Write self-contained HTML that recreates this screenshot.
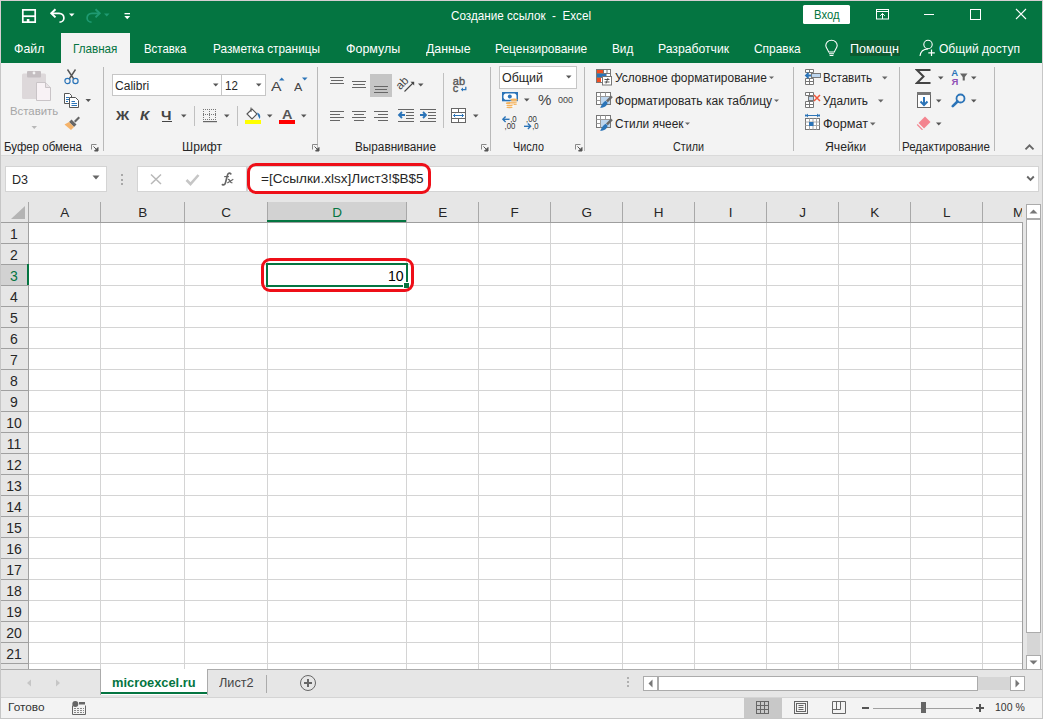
<!DOCTYPE html><html><head><meta charset="utf-8"><style>
html,body{margin:0;padding:0;width:1043px;height:719px;overflow:hidden;background:#fff;}
body{position:relative;font-family:"Liberation Sans",sans-serif;}
div{position:absolute;}
.t{position:absolute;white-space:nowrap;transform-origin:0 0;}
</style></head><body>
<div style="left:0px;top:0px;width:1043px;height:719px;background:#e6e6e6;"></div>
<div style="left:0px;top:0px;width:1043px;height:63px;background:#047541;"></div>
<div style="left:0px;top:63px;width:1043px;height:92px;background:#f3f3f3;"></div>
<div style="left:0px;top:155px;width:1043px;height:1px;background:#dadada;"></div>
<div style="left:61px;top:33px;width:69px;height:31px;background:#f3f3f3;"></div>
<span class="t" style="left:451.35px;top:9.00px;font-size:13px;line-height:13px;color:#fff;transform:scaleX(0.8988);white-space:pre;">Создание ссылок  -  Excel</span>
<div style="left:803px;top:5px;width:47px;height:19px;background:#fff;border-radius:1.5px;"></div>
<span class="t" style="left:813.90px;top:8.85px;font-size:12px;line-height:12px;color:#047541;transform:scaleX(0.9379);">Вход</span>
<span class="t" style="left:14.05px;top:41.50px;font-size:13px;line-height:13px;color:#fff;transform:scaleX(0.9493);">Файл</span>
<span class="t" style="left:143.75px;top:41.50px;font-size:13px;line-height:13px;color:#fff;transform:scaleX(0.8783);">Вставка</span>
<span class="t" style="left:212.85px;top:41.50px;font-size:13px;line-height:13px;color:#fff;transform:scaleX(0.9068);">Разметка страницы</span>
<span class="t" style="left:346.35px;top:41.50px;font-size:13px;line-height:13px;color:#fff;transform:scaleX(0.9588);">Формулы</span>
<span class="t" style="left:425.85px;top:41.50px;font-size:13px;line-height:13px;color:#fff;transform:scaleX(0.9483);">Данные</span>
<span class="t" style="left:495.35px;top:41.50px;font-size:13px;line-height:13px;color:#fff;transform:scaleX(0.9189);">Рецензирование</span>
<span class="t" style="left:612.35px;top:41.50px;font-size:13px;line-height:13px;color:#fff;transform:scaleX(0.9074);">Вид</span>
<span class="t" style="left:658.35px;top:41.50px;font-size:13px;line-height:13px;color:#fff;transform:scaleX(0.9371);">Разработчик</span>
<span class="t" style="left:754.35px;top:41.50px;font-size:13px;line-height:13px;color:#fff;transform:scaleX(0.9165);">Справка</span>
<span class="t" style="left:938.75px;top:41.50px;font-size:13px;line-height:13px;color:#fff;transform:scaleX(0.9267);">Общий доступ</span>
<span class="t" style="left:72.65px;top:41.50px;font-size:13px;line-height:13px;color:#047541;transform:scaleX(0.8981);">Главная</span>
<div style="left:850px;top:40px;width:50px;height:16px;background:#0c5a30;"></div>
<span class="t" style="left:850.35px;top:41.50px;font-size:13px;line-height:13px;color:#fff;transform:scaleX(0.9688);">Помощн</span>
<span class="t" style="left:4.40px;top:140.85px;font-size:12px;line-height:12px;color:#262626;transform:scaleX(0.9561);">Буфер обмена</span>
<span class="t" style="left:182.40px;top:140.85px;font-size:12px;line-height:12px;color:#262626;transform:scaleX(1.0121);">Шрифт</span>
<span class="t" style="left:355.40px;top:140.85px;font-size:12px;line-height:12px;color:#262626;transform:scaleX(0.9801);">Выравнивание</span>
<span class="t" style="left:513.40px;top:140.85px;font-size:12px;line-height:12px;color:#262626;transform:scaleX(0.8971);">Число</span>
<span class="t" style="left:673.40px;top:140.85px;font-size:12px;line-height:12px;color:#262626;transform:scaleX(0.8955);">Стили</span>
<span class="t" style="left:825.40px;top:140.85px;font-size:12px;line-height:12px;color:#262626;transform:scaleX(1.0177);">Ячейки</span>
<span class="t" style="left:902.40px;top:140.85px;font-size:12px;line-height:12px;color:#262626;transform:scaleX(0.9622);">Редактирование</span>
<div style="left:103px;top:67px;width:1px;height:84px;background:#b9b9b9;"></div>
<div style="left:317px;top:67px;width:1px;height:84px;background:#b9b9b9;"></div>
<div style="left:490px;top:67px;width:1px;height:84px;background:#b9b9b9;"></div>
<div style="left:584px;top:67px;width:1px;height:84px;background:#b9b9b9;"></div>
<div style="left:793px;top:67px;width:1px;height:84px;background:#b9b9b9;"></div>
<div style="left:899px;top:67px;width:1px;height:84px;background:#b9b9b9;"></div>
<div style="left:994px;top:67px;width:1px;height:84px;background:#b9b9b9;"></div>
<div style="left:5px;top:166px;width:102px;height:26px;background:#fff;border:1px solid #d4d4d4;box-sizing:border-box;"></div>
<span class="t" style="left:12.35px;top:173.00px;font-size:13px;line-height:13px;color:#262626;transform:scaleX(0.9652);">D3</span>
<div style="left:137px;top:166px;width:110px;height:26px;background:#fff;border:1px solid #d4d4d4;box-sizing:border-box;"></div>
<div style="left:247px;top:166px;width:792px;height:26px;background:#fff;border:1px solid #d4d4d4;box-sizing:border-box;"></div>
<span class="t" style="left:261.35px;top:172.30px;font-size:13px;line-height:13px;color:#262626;transform:scaleX(1.0423);">=[Ссылки.xlsx]Лист3!$B$5</span>
<div style="left:0px;top:202px;width:1022px;height:20px;background:#e6e6e6;"></div>
<div style="left:29px;top:223px;width:993px;height:446px;background:#fff;"></div>
<div style="left:0px;top:222px;width:28px;height:447px;background:#e6e6e6;"></div>
<div style="left:268px;top:202px;width:138px;height:20px;background:#d2d2d2;"></div>
<div style="left:100px;top:202px;width:1px;height:20px;background:#a8a8a8;"></div>
<div style="left:184px;top:202px;width:1px;height:20px;background:#a8a8a8;"></div>
<div style="left:267px;top:202px;width:1px;height:20px;background:#a8a8a8;"></div>
<div style="left:406px;top:202px;width:1px;height:20px;background:#a8a8a8;"></div>
<div style="left:478px;top:202px;width:1px;height:20px;background:#a8a8a8;"></div>
<div style="left:550px;top:202px;width:1px;height:20px;background:#a8a8a8;"></div>
<div style="left:622px;top:202px;width:1px;height:20px;background:#a8a8a8;"></div>
<div style="left:694px;top:202px;width:1px;height:20px;background:#a8a8a8;"></div>
<div style="left:766px;top:202px;width:1px;height:20px;background:#a8a8a8;"></div>
<div style="left:838px;top:202px;width:1px;height:20px;background:#a8a8a8;"></div>
<div style="left:910px;top:202px;width:1px;height:20px;background:#a8a8a8;"></div>
<div style="left:982px;top:202px;width:1px;height:20px;background:#a8a8a8;"></div>
<div style="left:28px;top:202px;width:1px;height:20px;background:#a8a8a8;"></div>
<div style="left:0px;top:222px;width:1022px;height:1px;background:#9e9e9e;"></div>
<div style="left:267px;top:220px;width:139px;height:2px;background:#047541;"></div>
<div style="left:100px;top:223px;width:1px;height:446px;background:#d4d4d4;"></div>
<div style="left:184px;top:223px;width:1px;height:446px;background:#d4d4d4;"></div>
<div style="left:267px;top:223px;width:1px;height:446px;background:#d4d4d4;"></div>
<div style="left:406px;top:223px;width:1px;height:446px;background:#d4d4d4;"></div>
<div style="left:478px;top:223px;width:1px;height:446px;background:#d4d4d4;"></div>
<div style="left:550px;top:223px;width:1px;height:446px;background:#d4d4d4;"></div>
<div style="left:622px;top:223px;width:1px;height:446px;background:#d4d4d4;"></div>
<div style="left:694px;top:223px;width:1px;height:446px;background:#d4d4d4;"></div>
<div style="left:766px;top:223px;width:1px;height:446px;background:#d4d4d4;"></div>
<div style="left:838px;top:223px;width:1px;height:446px;background:#d4d4d4;"></div>
<div style="left:910px;top:223px;width:1px;height:446px;background:#d4d4d4;"></div>
<div style="left:982px;top:223px;width:1px;height:446px;background:#d4d4d4;"></div>
<div style="left:29px;top:243px;width:993px;height:1px;background:#d4d4d4;"></div>
<div style="left:0px;top:243px;width:28px;height:1px;background:#a0a0a0;"></div>
<div style="left:29px;top:264px;width:993px;height:1px;background:#d4d4d4;"></div>
<div style="left:0px;top:264px;width:28px;height:1px;background:#a0a0a0;"></div>
<div style="left:29px;top:285px;width:993px;height:1px;background:#d4d4d4;"></div>
<div style="left:0px;top:285px;width:28px;height:1px;background:#a0a0a0;"></div>
<div style="left:29px;top:306px;width:993px;height:1px;background:#d4d4d4;"></div>
<div style="left:0px;top:306px;width:28px;height:1px;background:#a0a0a0;"></div>
<div style="left:29px;top:327px;width:993px;height:1px;background:#d4d4d4;"></div>
<div style="left:0px;top:327px;width:28px;height:1px;background:#a0a0a0;"></div>
<div style="left:29px;top:348px;width:993px;height:1px;background:#d4d4d4;"></div>
<div style="left:0px;top:348px;width:28px;height:1px;background:#a0a0a0;"></div>
<div style="left:29px;top:369px;width:993px;height:1px;background:#d4d4d4;"></div>
<div style="left:0px;top:369px;width:28px;height:1px;background:#a0a0a0;"></div>
<div style="left:29px;top:390px;width:993px;height:1px;background:#d4d4d4;"></div>
<div style="left:0px;top:390px;width:28px;height:1px;background:#a0a0a0;"></div>
<div style="left:29px;top:411px;width:993px;height:1px;background:#d4d4d4;"></div>
<div style="left:0px;top:411px;width:28px;height:1px;background:#a0a0a0;"></div>
<div style="left:29px;top:432px;width:993px;height:1px;background:#d4d4d4;"></div>
<div style="left:0px;top:432px;width:28px;height:1px;background:#a0a0a0;"></div>
<div style="left:29px;top:453px;width:993px;height:1px;background:#d4d4d4;"></div>
<div style="left:0px;top:453px;width:28px;height:1px;background:#a0a0a0;"></div>
<div style="left:29px;top:474px;width:993px;height:1px;background:#d4d4d4;"></div>
<div style="left:0px;top:474px;width:28px;height:1px;background:#a0a0a0;"></div>
<div style="left:29px;top:495px;width:993px;height:1px;background:#d4d4d4;"></div>
<div style="left:0px;top:495px;width:28px;height:1px;background:#a0a0a0;"></div>
<div style="left:29px;top:516px;width:993px;height:1px;background:#d4d4d4;"></div>
<div style="left:0px;top:516px;width:28px;height:1px;background:#a0a0a0;"></div>
<div style="left:29px;top:537px;width:993px;height:1px;background:#d4d4d4;"></div>
<div style="left:0px;top:537px;width:28px;height:1px;background:#a0a0a0;"></div>
<div style="left:29px;top:558px;width:993px;height:1px;background:#d4d4d4;"></div>
<div style="left:0px;top:558px;width:28px;height:1px;background:#a0a0a0;"></div>
<div style="left:29px;top:579px;width:993px;height:1px;background:#d4d4d4;"></div>
<div style="left:0px;top:579px;width:28px;height:1px;background:#a0a0a0;"></div>
<div style="left:29px;top:600px;width:993px;height:1px;background:#d4d4d4;"></div>
<div style="left:0px;top:600px;width:28px;height:1px;background:#a0a0a0;"></div>
<div style="left:29px;top:621px;width:993px;height:1px;background:#d4d4d4;"></div>
<div style="left:0px;top:621px;width:28px;height:1px;background:#a0a0a0;"></div>
<div style="left:29px;top:642px;width:993px;height:1px;background:#d4d4d4;"></div>
<div style="left:0px;top:642px;width:28px;height:1px;background:#a0a0a0;"></div>
<div style="left:29px;top:663px;width:993px;height:1px;background:#d4d4d4;"></div>
<div style="left:0px;top:663px;width:28px;height:1px;background:#a0a0a0;"></div>
<div style="left:28px;top:222px;width:1px;height:447px;background:#a0a0a0;"></div>
<div style="left:1022px;top:222px;width:1px;height:447px;background:#a0a0a0;"></div>
<div style="left:0px;top:265px;width:28px;height:20px;background:#d2d2d2;"></div>
<div style="left:27px;top:264px;width:2px;height:21px;background:#047541;"></div>
<svg style="position:absolute;left:8px;top:204px;" width="18" height="16" viewBox="0 0 18 16"><path d="M17 2 L17 15 L3 15 Z" fill="#b4b4b4"/></svg>
<span class="t" style="left:60.20px;top:205.58px;font-size:13.5px;line-height:13.5px;color:#262626;transform:scaleX(1.0000);">A</span>
<span class="t" style="left:138.20px;top:205.58px;font-size:13.5px;line-height:13.5px;color:#262626;transform:scaleX(1.0000);">B</span>
<span class="t" style="left:221.33px;top:205.58px;font-size:13.5px;line-height:13.5px;color:#262626;transform:scaleX(1.0000);">C</span>
<span class="t" style="left:332.33px;top:205.58px;font-size:13.5px;line-height:13.5px;color:#047541;transform:scaleX(1.0000);">D</span>
<span class="t" style="left:438.20px;top:205.58px;font-size:13.5px;line-height:13.5px;color:#262626;transform:scaleX(1.0000);">E</span>
<span class="t" style="left:510.58px;top:205.58px;font-size:13.5px;line-height:13.5px;color:#262626;transform:scaleX(1.0000);">F</span>
<span class="t" style="left:581.45px;top:205.58px;font-size:13.5px;line-height:13.5px;color:#262626;transform:scaleX(1.0000);">G</span>
<span class="t" style="left:653.83px;top:205.58px;font-size:13.5px;line-height:13.5px;color:#262626;transform:scaleX(1.0000);">H</span>
<span class="t" style="left:728.82px;top:205.58px;font-size:13.5px;line-height:13.5px;color:#262626;transform:scaleX(1.0000);">I</span>
<span class="t" style="left:799.33px;top:205.58px;font-size:13.5px;line-height:13.5px;color:#262626;transform:scaleX(1.0000);">J</span>
<span class="t" style="left:870.20px;top:205.58px;font-size:13.5px;line-height:13.5px;color:#262626;transform:scaleX(1.0000);">K</span>
<span class="t" style="left:942.95px;top:205.58px;font-size:13.5px;line-height:13.5px;color:#262626;transform:scaleX(1.0000);">L</span>
<span class="t" style="left:1013.08px;top:205.58px;font-size:13.5px;line-height:13.5px;color:#262626;transform:scaleX(1.0000);">M</span>
<span class="t" style="left:10.11px;top:227.16px;font-size:14px;line-height:14px;color:#262626;transform:scaleX(1.0000);">1</span>
<span class="t" style="left:10.11px;top:248.16px;font-size:14px;line-height:14px;color:#262626;transform:scaleX(1.0000);">2</span>
<span class="t" style="left:10.11px;top:269.16px;font-size:14px;line-height:14px;color:#047541;transform:scaleX(1.0000);">3</span>
<span class="t" style="left:10.11px;top:290.16px;font-size:14px;line-height:14px;color:#262626;transform:scaleX(1.0000);">4</span>
<span class="t" style="left:10.11px;top:311.16px;font-size:14px;line-height:14px;color:#262626;transform:scaleX(1.0000);">5</span>
<span class="t" style="left:10.11px;top:332.16px;font-size:14px;line-height:14px;color:#262626;transform:scaleX(1.0000);">6</span>
<span class="t" style="left:10.11px;top:353.16px;font-size:14px;line-height:14px;color:#262626;transform:scaleX(1.0000);">7</span>
<span class="t" style="left:10.11px;top:374.16px;font-size:14px;line-height:14px;color:#262626;transform:scaleX(1.0000);">8</span>
<span class="t" style="left:10.11px;top:395.16px;font-size:14px;line-height:14px;color:#262626;transform:scaleX(1.0000);">9</span>
<span class="t" style="left:6.21px;top:416.16px;font-size:14px;line-height:14px;color:#262626;transform:scaleX(1.0000);">10</span>
<span class="t" style="left:6.73px;top:437.16px;font-size:14px;line-height:14px;color:#262626;transform:scaleX(1.0000);">11</span>
<span class="t" style="left:6.21px;top:458.16px;font-size:14px;line-height:14px;color:#262626;transform:scaleX(1.0000);">12</span>
<span class="t" style="left:6.21px;top:479.16px;font-size:14px;line-height:14px;color:#262626;transform:scaleX(1.0000);">13</span>
<span class="t" style="left:6.21px;top:500.16px;font-size:14px;line-height:14px;color:#262626;transform:scaleX(1.0000);">14</span>
<span class="t" style="left:6.21px;top:521.16px;font-size:14px;line-height:14px;color:#262626;transform:scaleX(1.0000);">15</span>
<span class="t" style="left:6.21px;top:542.16px;font-size:14px;line-height:14px;color:#262626;transform:scaleX(1.0000);">16</span>
<span class="t" style="left:6.21px;top:563.16px;font-size:14px;line-height:14px;color:#262626;transform:scaleX(1.0000);">17</span>
<span class="t" style="left:6.21px;top:584.16px;font-size:14px;line-height:14px;color:#262626;transform:scaleX(1.0000);">18</span>
<span class="t" style="left:6.21px;top:605.16px;font-size:14px;line-height:14px;color:#262626;transform:scaleX(1.0000);">19</span>
<span class="t" style="left:6.21px;top:626.16px;font-size:14px;line-height:14px;color:#262626;transform:scaleX(1.0000);">20</span>
<span class="t" style="left:6.21px;top:647.16px;font-size:14px;line-height:14px;color:#262626;transform:scaleX(1.0000);">21</span>
<div style="left:1022px;top:202px;width:4px;height:20px;background:#e6e6e6;"></div>
<div style="left:266px;top:263px;width:142px;height:24px;border:2px solid #047541;box-sizing:border-box;"></div>
<div style="left:404px;top:283px;width:5px;height:5px;background:#047541;outline:1px solid #fff;"></div>
<span class="t" style="left:388.30px;top:269.16px;font-size:14px;line-height:14px;color:#000;transform:scaleX(1.0095);">10</span>
<div style="left:247px;top:163px;width:184px;height:31px;border:3px solid #ee0f18;border-radius:9px;box-sizing:border-box;"></div>
<div style="left:261px;top:258px;width:153px;height:34px;border:3px solid #ee0f18;border-radius:9px;box-sizing:border-box;"></div>
<div style="left:1023px;top:202px;width:19px;height:467px;background:#e6e6e6;"></div>
<div style="left:1026px;top:204px;width:15px;height:15px;background:#fff;border:1px solid #ababab;box-sizing:border-box;"></div>
<div style="left:1026px;top:219px;width:15px;height:414px;background:#fff;border:1px solid #ababab;box-sizing:border-box;"></div>
<div style="left:1026px;top:655px;width:15px;height:15px;background:#fff;border:1px solid #ababab;box-sizing:border-box;"></div>
<div style="left:0px;top:669px;width:1043px;height:29px;background:#e6e6e6;"></div>
<div style="left:0px;top:669px;width:100px;height:1px;background:#ababab;"></div>
<div style="left:208px;top:669px;width:835px;height:1px;background:#ababab;"></div>
<div style="left:100px;top:669px;width:108px;height:26px;background:#fff;border-left:1px solid #ababab;border-right:1px solid #ababab;box-sizing:border-box;"></div>
<div style="left:101px;top:692px;width:106px;height:2px;background:#047541;"></div>
<span class="t" style="left:111.83px;top:676.18px;font-size:13.5px;line-height:13.5px;color:#047541;font-weight:bold;transform:scaleX(0.9520);">microexcel.ru</span>
<span class="t" style="left:219.35px;top:676.20px;font-size:13px;line-height:13px;color:#444;transform:scaleX(0.9764);">Лист2</span>
<div style="left:266px;top:675px;width:1px;height:18px;background:#ababab;"></div>
<div style="left:643px;top:676px;width:15px;height:15px;background:#fff;border:1px solid #ababab;box-sizing:border-box;"></div>
<div style="left:658px;top:676px;width:320px;height:15px;background:#fff;border:1px solid #ababab;box-sizing:border-box;"></div>
<div style="left:978px;top:677px;width:32px;height:13px;background:#d6d6d6;"></div>
<div style="left:1027px;top:633px;width:13px;height:22px;background:#d6d6d6;"></div>
<div style="left:1010px;top:676px;width:15px;height:15px;background:#fff;border:1px solid #ababab;box-sizing:border-box;"></div>
<div style="left:0px;top:698px;width:1043px;height:20px;background:#f3f3f3;"></div>
<div style="left:0px;top:697px;width:1043px;height:1px;background:#d4d4d4;"></div>
<span class="t" style="left:8.03px;top:702.07px;font-size:11.5px;line-height:11.5px;color:#333;transform:scaleX(1.0312);">Готово</span>
<div style="left:744px;top:698px;width:38px;height:20px;background:#c8c8c8;"></div>
<span class="t" style="left:995.02px;top:702.07px;font-size:11.5px;line-height:11.5px;color:#333;transform:scaleX(0.9114);">100 %</span>
<div style="left:0px;top:0px;width:1043px;height:1px;background:#d6cfd2;"></div>
<div style="left:0px;top:0px;width:1px;height:63px;background:#d6cfd2;"></div>
<div style="left:0px;top:63px;width:1px;height:656px;background:#c6c6c6;"></div>
<div style="left:1042px;top:0px;width:1px;height:63px;background:#d6cfd2;"></div>
<div style="left:1042px;top:63px;width:1px;height:656px;background:#c6c6c6;"></div>
<div style="left:0px;top:718px;width:1043px;height:1px;background:#c6c6c6;"></div>
<svg style="position:absolute;left:21px;top:8px;" width="16" height="16" viewBox="0 0 16 16"><path d="M1.8 1.8 H14.2 V14.2 H1.8 Z" fill="none" stroke="#fff" stroke-width="1.7"/><path d="M2 8.2 H14" stroke="#fff" stroke-width="1.8"/><rect x="5.8" y="11" width="2.6" height="3" fill="#fff"/></svg>
<svg style="position:absolute;left:49px;top:7px;" width="18" height="17" viewBox="0 0 18 17"><path d="M6.5 2.2 L2.3 6.3 L6.5 10.4" fill="none" stroke="#fff" stroke-width="2" stroke-linejoin="miter"/><path d="M3 6.3 H10 C13 6.3 14.9 8.5 14.9 11 C14.9 13.4 13 15.2 10.5 15.2" fill="none" stroke="#fff" stroke-width="1.7"/></svg>
<svg style="position:absolute;left:69px;top:13px;" width="6" height="4" viewBox="0 0 6 4"><path d="M0 0.5 H5.5 L2.75 3.5 Z" fill="#fff"/></svg>
<svg style="position:absolute;left:84px;top:7px;" width="18" height="17" viewBox="0 0 18 17"><path d="M11.5 2.2 L15.7 6.3 L11.5 10.4" fill="none" stroke="#1f9a72" stroke-width="2" stroke-linejoin="miter"/><path d="M15 6.3 H8 C5 6.3 3.1 8.5 3.1 11 C3.1 13.4 5 15.2 7.5 15.2" fill="none" stroke="#1f9a72" stroke-width="1.7"/></svg>
<svg style="position:absolute;left:104px;top:13px;" width="6" height="4" viewBox="0 0 6 4"><path d="M0 0.5 H5.5 L2.75 3.5 Z" fill="#1f9a72"/></svg>
<svg style="position:absolute;left:124px;top:12px;" width="7" height="8" viewBox="0 0 7 8"><rect x="0.5" y="1" width="5.5" height="1.3" fill="#fff"/><path d="M0.3 4 H6.2 L3.25 7.2 Z" fill="#fff"/></svg>
<svg style="position:absolute;left:875px;top:8px;" width="15" height="12" viewBox="0 0 15 12"><rect x="1.5" y="1.5" width="12" height="9.5" fill="none" stroke="#fff" stroke-width="1"/><path d="M1.5 3.5 H13.5" stroke="#fff" stroke-width="1"/><path d="M7.5 11 V5.5 M5.2 7.8 L7.5 5.5 L9.8 7.8" stroke="#fff" stroke-width="1" fill="none"/></svg>
<div style="left:924px;top:14px;width:10px;height:1px;background:#fff;"></div>
<div style="left:970px;top:9px;width:11px;height:11px;border:1px solid #fff;box-sizing:border-box;"></div>
<svg style="position:absolute;left:1015px;top:8px;" width="12" height="12" viewBox="0 0 12 12"><path d="M1 1 L11 11 M11 1 L1 11" stroke="#fff" stroke-width="1.1"/></svg>
<svg style="position:absolute;left:824px;top:39px;" width="15" height="18" viewBox="0 0 15 18"><path d="M7.5 1.2 C4 1.2 1.8 3.8 1.8 6.6 C1.8 9.2 4.2 10.8 4.6 13 H10.4 C10.8 10.8 13.2 9.2 13.2 6.6 C13.2 3.8 11 1.2 7.5 1.2 Z" fill="none" stroke="#fff" stroke-width="1.1"/><path d="M5 14.7 H10 M5.6 16.5 H9.4" stroke="#fff" stroke-width="1.1"/></svg>
<svg style="position:absolute;left:919px;top:39px;" width="17" height="18" viewBox="0 0 17 18"><circle cx="9" cy="5.5" r="4.2" fill="none" stroke="#fff" stroke-width="1.1"/><path d="M1 17 C1.5 12.5 4.5 10 9 10" fill="none" stroke="#fff" stroke-width="1.1"/><path d="M12.5 10.5 V17 M9.3 13.8 H15.8" stroke="#fff" stroke-width="1.2"/></svg>
<svg style="position:absolute;left:20px;top:70px;" width="32" height="32" viewBox="0 0 32 32"><rect x="2" y="3.5" width="24" height="25.5" rx="1.5" fill="#ddd8da"/><rect x="7" y="1" width="14" height="6.5" rx="1" fill="#c4bec1"/><circle cx="14" cy="3" r="1.4" fill="#f3f3f3"/><path d="M16.5 12.5 H25.5 L30.5 17.5 V30.5 H16.5 Z" fill="#f8f2f5" stroke="#c9c4c7" stroke-width="1"/><path d="M25.5 12.5 V17.5 H30.5" fill="#e8e2e5" stroke="#c9c4c7" stroke-width="1"/></svg>
<span class="t" style="left:10.12px;top:106.27px;font-size:11.5px;line-height:11.5px;color:#a6a6a6;transform:scaleX(0.9892);">Вставить</span>
<svg style="position:absolute;left:31px;top:125px;" width="7" height="5" viewBox="0 0 7 5"><path d="M0.5 1 H6 L3.25 4 Z" fill="#b8b8b8"/></svg>
<svg style="position:absolute;left:63px;top:69px;" width="17" height="16" viewBox="0 0 17 16"><path d="M4.5 0.5 L10.8 10 M12.5 0.5 L6.2 10" stroke="#555" stroke-width="1.4"/><circle cx="4.5" cy="12" r="2.6" fill="none" stroke="#2b74b8" stroke-width="1.2"/><circle cx="12.5" cy="12" r="2.6" fill="none" stroke="#2b74b8" stroke-width="1.2"/></svg>
<svg style="position:absolute;left:63px;top:92px;" width="17" height="17" viewBox="0 0 17 17"><path d="M1.5 1.5 H6.5 L8.5 3.5 V11.5 H1.5 Z" fill="#fff" stroke="#555" stroke-width="1"/><path d="M3 5.5 H6 M3 7.5 H6 M3 9.5 H5" stroke="#2b74b8" stroke-width="1"/><path d="M6.5 5.5 H12.5 L15.5 8.5 V15.5 H6.5 Z" fill="#fff" stroke="#555" stroke-width="1"/><path d="M8.5 9.5 H12 M8.5 11.5 H14 M8.5 13.5 H14" stroke="#2b74b8" stroke-width="1"/></svg>
<svg style="position:absolute;left:85px;top:98px;" width="7" height="5" viewBox="0 0 7 5"><path d="M0.5 1 H6 L3.25 4 Z" fill="#555"/></svg>
<svg style="position:absolute;left:63px;top:115px;" width="18" height="16" viewBox="0 0 18 16"><path d="M11 6 L15.5 1.5 L17 3 L12.5 7.5 Z" fill="#666"/><path d="M8.5 4.5 L13.5 9.5 L11 12 L6 7 Z" fill="#666"/><path d="M6 7 L11 12 L8 15 L1.5 9.5 Z" fill="#f5b36a"/></svg>
<div style="left:112px;top:74px;width:110px;height:22px;background:#fff;border:1px solid #c6c6c6;box-sizing:border-box;"></div>
<div style="left:221px;top:74px;width:45px;height:22px;background:#fff;border:1px solid #c6c6c6;box-sizing:border-box;"></div>
<span class="t" style="left:114.78px;top:79.92px;font-size:12.5px;line-height:12.5px;color:#262626;transform:scaleX(0.9625);">Calibri</span>
<span class="t" style="left:225.38px;top:79.92px;font-size:12.5px;line-height:12.5px;color:#262626;transform:scaleX(0.9206);">12</span>
<svg style="position:absolute;left:213px;top:83px;" width="6" height="4" viewBox="0 0 6 4"><path d="M0 0.5 H5.5 L2.75 3.5 Z" fill="#555"/></svg>
<svg style="position:absolute;left:256px;top:83px;" width="6" height="4" viewBox="0 0 6 4"><path d="M0 0.5 H5.5 L2.75 3.5 Z" fill="#555"/></svg>
<span class="t" style="left:271.38px;top:80.92px;font-size:12.5px;line-height:12.5px;color:#444;transform:scaleX(1.2593);">A</span>
<svg style="position:absolute;left:279px;top:77px;" width="6" height="4" viewBox="0 0 6 4"><path d="M0 3.5 H5.5 L2.75 0.5 Z" fill="#2b74b8"/></svg>
<span class="t" style="left:294.30px;top:83.04px;font-size:10px;line-height:10px;color:#444;transform:scaleX(1.2443);">A</span>
<svg style="position:absolute;left:302px;top:77px;" width="6" height="4" viewBox="0 0 6 4"><path d="M0 0.5 H5.5 L2.75 3.5 Z" fill="#2b74b8"/></svg>
<span class="t" style="left:116.33px;top:109.08px;font-size:13.5px;line-height:13.5px;color:#444;font-weight:bold;transform:scaleX(1.0802);">Ж</span>
<span class="t" style="left:139.52px;top:109.08px;font-size:13.5px;line-height:13.5px;color:#444;font-weight:bold;transform:scaleX(1.1140);font-style:italic;">К</span>
<span class="t" style="left:161.32px;top:109.08px;font-size:13.5px;line-height:13.5px;color:#444;font-weight:bold;transform:scaleX(1.1048);">Ч</span>
<div style="left:162px;top:121px;width:10px;height:1px;background:#444;"></div>
<div style="left:194px;top:106px;width:1px;height:20px;background:#c0c0c0;"></div>
<div style="left:237px;top:106px;width:1px;height:20px;background:#c0c0c0;"></div>
<svg style="position:absolute;left:181px;top:114px;" width="6" height="4" viewBox="0 0 6 4"><path d="M0 0.5 H5.5 L2.75 3.5 Z" fill="#555"/></svg>
<svg style="position:absolute;left:224px;top:114px;" width="6" height="4" viewBox="0 0 6 4"><path d="M0 0.5 H5.5 L2.75 3.5 Z" fill="#555"/></svg>
<svg style="position:absolute;left:267px;top:114px;" width="6" height="4" viewBox="0 0 6 4"><path d="M0 0.5 H5.5 L2.75 3.5 Z" fill="#555"/></svg>
<svg style="position:absolute;left:301px;top:114px;" width="6" height="4" viewBox="0 0 6 4"><path d="M0 0.5 H5.5 L2.75 3.5 Z" fill="#555"/></svg>
<svg style="position:absolute;left:203px;top:109px;" width="14" height="14" viewBox="0 0 14 14"><rect x="0" y="0" width="1" height="1" fill="#777"/><rect x="0" y="5" width="1" height="1" fill="#777"/><rect x="0" y="10" width="1" height="1" fill="#777"/><rect x="2" y="0" width="1" height="1" fill="#777"/><rect x="2" y="5" width="1" height="1" fill="#777"/><rect x="2" y="10" width="1" height="1" fill="#777"/><rect x="4" y="0" width="1" height="1" fill="#777"/><rect x="4" y="5" width="1" height="1" fill="#777"/><rect x="4" y="10" width="1" height="1" fill="#777"/><rect x="6" y="0" width="1" height="1" fill="#777"/><rect x="6" y="5" width="1" height="1" fill="#777"/><rect x="6" y="10" width="1" height="1" fill="#777"/><rect x="8" y="0" width="1" height="1" fill="#777"/><rect x="8" y="5" width="1" height="1" fill="#777"/><rect x="8" y="10" width="1" height="1" fill="#777"/><rect x="10" y="0" width="1" height="1" fill="#777"/><rect x="10" y="5" width="1" height="1" fill="#777"/><rect x="10" y="10" width="1" height="1" fill="#777"/><rect x="12" y="0" width="1" height="1" fill="#777"/><rect x="12" y="5" width="1" height="1" fill="#777"/><rect x="12" y="10" width="1" height="1" fill="#777"/><rect x="0" y="0" width="1" height="1" fill="#777"/><rect x="6" y="0" width="1" height="1" fill="#777"/><rect x="12" y="0" width="1" height="1" fill="#777"/><rect x="0" y="2" width="1" height="1" fill="#777"/><rect x="6" y="2" width="1" height="1" fill="#777"/><rect x="12" y="2" width="1" height="1" fill="#777"/><rect x="0" y="4" width="1" height="1" fill="#777"/><rect x="6" y="4" width="1" height="1" fill="#777"/><rect x="12" y="4" width="1" height="1" fill="#777"/><rect x="0" y="6" width="1" height="1" fill="#777"/><rect x="6" y="6" width="1" height="1" fill="#777"/><rect x="12" y="6" width="1" height="1" fill="#777"/><rect x="0" y="8" width="1" height="1" fill="#777"/><rect x="6" y="8" width="1" height="1" fill="#777"/><rect x="12" y="8" width="1" height="1" fill="#777"/><rect x="0" y="10" width="1" height="1" fill="#777"/><rect x="6" y="10" width="1" height="1" fill="#777"/><rect x="12" y="10" width="1" height="1" fill="#777"/><rect x="0" y="12" width="14" height="1.2" fill="#666"/></svg>
<svg style="position:absolute;left:244px;top:106px;" width="18" height="19" viewBox="0 0 18 19"><path d="M3 8 L8 3 L13 8 L8 13 Z" fill="#fff" stroke="#555" stroke-width="1.1"/><path d="M7 1.5 V6" stroke="#555" stroke-width="1"/><path d="M13.2 6.5 C15.5 7.5 17 9.5 15.8 13 C14.8 11.5 13.5 9.5 13.2 6.5 Z" fill="#2b74b8"/><rect x="1" y="14" width="16" height="4" fill="#ffff00"/></svg>
<span class="t" style="left:282.25px;top:108.30px;font-size:13px;line-height:13px;color:#555;font-weight:bold;transform:scaleX(1.1120);">A</span>
<div style="left:279px;top:120px;width:16px;height:4px;background:#ff0000;"></div>
<div style="left:370px;top:74px;width:22px;height:23px;background:#c5c5c5;"></div>
<div style="left:330px;top:77px;width:14px;height:1px;background:#666;"></div>
<div style="left:331px;top:80px;width:12px;height:1px;background:#666;"></div>
<div style="left:330px;top:83px;width:14px;height:1px;background:#666;"></div>
<div style="left:352px;top:81px;width:14px;height:1px;background:#666;"></div>
<div style="left:353px;top:84px;width:12px;height:1px;background:#666;"></div>
<div style="left:352px;top:87px;width:14px;height:1px;background:#666;"></div>
<div style="left:374px;top:86px;width:14px;height:1px;background:#666;"></div>
<div style="left:375px;top:89px;width:12px;height:1px;background:#666;"></div>
<div style="left:374px;top:92px;width:14px;height:1px;background:#666;"></div>
<div style="left:330px;top:111px;width:14px;height:1px;background:#666;"></div>
<div style="left:330px;top:114px;width:10px;height:1px;background:#666;"></div>
<div style="left:330px;top:117px;width:14px;height:1px;background:#666;"></div>
<div style="left:330px;top:120px;width:10px;height:1px;background:#666;"></div>
<div style="left:352px;top:111px;width:14px;height:1px;background:#666;"></div>
<div style="left:354px;top:114px;width:10px;height:1px;background:#666;"></div>
<div style="left:352px;top:117px;width:14px;height:1px;background:#666;"></div>
<div style="left:354px;top:120px;width:10px;height:1px;background:#666;"></div>
<div style="left:374px;top:111px;width:14px;height:1px;background:#666;"></div>
<div style="left:378px;top:114px;width:10px;height:1px;background:#666;"></div>
<div style="left:374px;top:117px;width:14px;height:1px;background:#666;"></div>
<div style="left:378px;top:120px;width:10px;height:1px;background:#666;"></div>
<div style="left:398px;top:109px;width:16px;height:1px;background:#666;"></div>
<div style="left:406px;top:112px;width:8px;height:1px;background:#666;"></div>
<div style="left:406px;top:115px;width:8px;height:1px;background:#666;"></div>
<div style="left:406px;top:118px;width:8px;height:1px;background:#666;"></div>
<div style="left:398px;top:121px;width:16px;height:1px;background:#666;"></div>
<div style="left:420px;top:109px;width:16px;height:1px;background:#666;"></div>
<div style="left:428px;top:112px;width:8px;height:1px;background:#666;"></div>
<div style="left:428px;top:115px;width:8px;height:1px;background:#666;"></div>
<div style="left:428px;top:118px;width:8px;height:1px;background:#666;"></div>
<div style="left:420px;top:121px;width:16px;height:1px;background:#666;"></div>
<svg style="position:absolute;left:397px;top:111px;" width="9" height="8" viewBox="0 0 9 8"><path d="M8 4 H2.5 M5 1 L2 4 L5 7" stroke="#2b74b8" stroke-width="1.8" fill="none"/></svg>
<svg style="position:absolute;left:419px;top:111px;" width="9" height="8" viewBox="0 0 9 8"><path d="M1 4 H6.5 M4 1 L7 4 L4 7" stroke="#2b74b8" stroke-width="1.8" fill="none"/></svg>
<svg style="position:absolute;left:394px;top:72px;" width="24" height="24" viewBox="0 0 24 24"><text x="0" y="0" transform="translate(6.2,18.2) rotate(-45)" font-family="Liberation Sans" font-size="11.5" fill="#444">ab</text><path d="M10.5 19.5 L19.5 10.5" stroke="#444" stroke-width="1.1" fill="none"/><path d="M16.5 9.8 L20.2 9.8 L20.2 13.5 Z" fill="#444"/></svg>
<svg style="position:absolute;left:418px;top:83px;" width="6" height="4" viewBox="0 0 6 4"><path d="M0 0.5 H5.5 L2.75 3.5 Z" fill="#555"/></svg>
<div style="left:443px;top:73px;width:1px;height:55px;background:#c0c0c0;"></div>
<svg style="position:absolute;left:450px;top:76px;" width="20" height="18" viewBox="0 0 20 18"><text x="2.8" y="9.2" font-family="Liberation Sans" font-size="11" fill="#555" stroke="#555" stroke-width="0.35">ab</text><text x="2.8" y="16.4" font-family="Liberation Sans" font-size="11" fill="#555" stroke="#555" stroke-width="0.35">c</text><path d="M15.8 10.8 V13.6 H11.8" stroke="#2b74b8" stroke-width="1.3" fill="none"/><path d="M13 11.6 L10.8 13.6 L13 15.6 Z" fill="#2b74b8"/></svg>
<svg style="position:absolute;left:450px;top:107px;" width="17" height="17" viewBox="0 0 17 17"><rect x="1.5" y="1.5" width="14" height="14" fill="#fff" stroke="#666" stroke-width="1"/><path d="M1.5 5.5 H15.5 M1.5 11.5 H15.5 M8.5 1.5 V5.5 M8.5 11.5 V15.5" stroke="#666" stroke-width="1"/><path d="M3.5 8.5 H13.5 M5.2 6.8 L3.5 8.5 L5.2 10.2 M11.8 6.8 L13.5 8.5 L11.8 10.2" stroke="#2b74b8" stroke-width="1" fill="none"/></svg>
<svg style="position:absolute;left:473px;top:114px;" width="6" height="4" viewBox="0 0 6 4"><path d="M0 0.5 H5.5 L2.75 3.5 Z" fill="#555"/></svg>
<div style="left:499px;top:66px;width:78px;height:23px;background:#fff;border:1px solid #c6c6c6;box-sizing:border-box;"></div>
<span class="t" style="left:501.77px;top:71.92px;font-size:12.5px;line-height:12.5px;color:#262626;transform:scaleX(0.9968);">Общий</span>
<svg style="position:absolute;left:566px;top:75px;" width="6" height="4" viewBox="0 0 6 4"><path d="M0 0.5 H5.5 L2.75 3.5 Z" fill="#555"/></svg>
<svg style="position:absolute;left:501px;top:91px;" width="18" height="18" viewBox="0 0 18 18"><rect x="1.75" y="1.75" width="14.5" height="7.8" fill="#fff" stroke="#2b74b8" stroke-width="1.5"/><circle cx="8.8" cy="5.6" r="2" fill="#2b74b8"/><path d="M2 2 L4.5 2 L2 4.5 Z M16 2 L13.5 2 L16 4.5 Z M2 9.3 L4.5 9.3 L2 6.8 Z" fill="#2b74b8"/><g fill="#f3b35f"><ellipse cx="13" cy="8.8" rx="3.6" ry="1.3"/><ellipse cx="13" cy="11" rx="3.2" ry="1"/><ellipse cx="13" cy="13" rx="3.2" ry="1"/><ellipse cx="8.5" cy="12.2" rx="3.6" ry="1.3"/><ellipse cx="8.5" cy="14.4" rx="3.2" ry="1"/><ellipse cx="8.5" cy="16.3" rx="3.2" ry="1"/></g><g fill="#fff"><rect x="4" y="13.3" width="9" height="0.5"/><rect x="4" y="15.3" width="9" height="0.5"/><rect x="9" y="9.9" width="8" height="0.5"/><rect x="9" y="11.9" width="8" height="0.5"/></g></svg>
<svg style="position:absolute;left:524px;top:98px;" width="6" height="4" viewBox="0 0 6 4"><path d="M0 0.5 H5.5 L2.75 3.5 Z" fill="#555"/></svg>
<span class="t" style="left:537.77px;top:93.23px;font-size:14.5px;line-height:14.5px;color:#444;transform:scaleX(1.0363);">%</span>
<span class="t" style="left:558.23px;top:95.26px;font-size:9.5px;line-height:9.5px;color:#444;transform:scaleX(0.9501);">000</span>
<svg style="position:absolute;left:500px;top:114px;" width="20" height="17" viewBox="0 0 20 17"><path d="M9.5 5.3 H3.2" stroke="#2b74b8" stroke-width="1.4" fill="none"/><path d="M5.6 2.6 L2.9 5.3 L5.6 8" stroke="#2b74b8" stroke-width="1.4" fill="none"/><text transform="translate(10.2,7.9) scale(0.82,1)" font-family="Liberation Sans" font-size="9.5" fill="#333">,0</text><text transform="translate(4.6,15.3) scale(0.82,1)" font-family="Liberation Sans" font-size="9.5" fill="#333">,00</text></svg>
<svg style="position:absolute;left:522px;top:114px;" width="20" height="17" viewBox="0 0 20 17"><text transform="translate(4.0,7.9) scale(0.82,1)" font-family="Liberation Sans" font-size="9.5" fill="#333">,00</text><path d="M2 12.3 H8.3" stroke="#2b74b8" stroke-width="1.4" fill="none"/><path d="M5.9 9.6 L8.6 12.3 L5.9 15" stroke="#2b74b8" stroke-width="1.4" fill="none"/><text transform="translate(10.2,15.3) scale(0.82,1)" font-family="Liberation Sans" font-size="9.5" fill="#333">,0</text></svg>
<span class="t" style="left:614.88px;top:71.92px;font-size:12.5px;line-height:12.5px;color:#262626;transform:scaleX(0.9552);">Условное форматирование</span>
<span class="t" style="left:614.88px;top:94.72px;font-size:12.5px;line-height:12.5px;color:#262626;transform:scaleX(0.9660);">Форматировать как таблицу</span>
<span class="t" style="left:614.88px;top:117.73px;font-size:12.5px;line-height:12.5px;color:#262626;transform:scaleX(0.9496);">Стили ячеек</span>
<svg style="position:absolute;left:769px;top:76px;" width="6" height="4" viewBox="0 0 6 4"><path d="M0 0.5 H5 L2.5 3 Z" fill="#666"/></svg>
<svg style="position:absolute;left:774px;top:99px;" width="6" height="4" viewBox="0 0 6 4"><path d="M0 0.5 H5 L2.5 3 Z" fill="#666"/></svg>
<svg style="position:absolute;left:685px;top:122px;" width="6" height="4" viewBox="0 0 6 4"><path d="M0 0.5 H5 L2.5 3 Z" fill="#666"/></svg>
<svg style="position:absolute;left:595px;top:68px;" width="18" height="18" viewBox="0 0 18 18"><rect x="1.5" y="1.5" width="14" height="13" fill="#fff" stroke="#777" stroke-width="1"/><path d="M1.5 5.5 H15.5 M1.5 9.5 H8 M8.5 1.5 V5.5 M12 1.5 V5.5" stroke="#777" stroke-width="1"/><rect x="2" y="2" width="6" height="3" fill="#f04e23"/><rect x="2" y="6" width="9.5" height="3" fill="#2b74b8"/><rect x="2" y="10" width="4" height="4" fill="#f04e23"/><rect x="7.5" y="8.5" width="9" height="8.5" fill="#fff" stroke="#777" stroke-width="1"/><path d="M9.5 11.5 H14.5 M9.5 14 H14.5 M13 10 L11 15.5" stroke="#444" stroke-width="0.9"/></svg>
<svg style="position:absolute;left:595px;top:91px;" width="18" height="18" viewBox="0 0 18 18"><rect x="1.5" y="1.5" width="14" height="12" fill="#fff" stroke="#777" stroke-width="1"/><path d="M1.5 5.5 H15.5 M1.5 9.5 H6 M5.5 1.5 V13.5 M10.5 1.5 V5.5" stroke="#999" stroke-width="1"/><rect x="6" y="6" width="9" height="7" fill="#bcd5ee"/><path d="M11 9.5 L16 4.5 L17.8 6.3 L12.8 11.3 Z" fill="#6a6a6a"/><path d="M10.6 9.8 L12.6 11.8 C12.2 14.8 9 16.8 5.2 17 C6.2 14.6 7.8 11.2 10.6 9.8 Z" fill="#2b74b8"/></svg>
<svg style="position:absolute;left:595px;top:114px;" width="18" height="18" viewBox="0 0 18 18"><rect x="1.5" y="1.5" width="14" height="12" fill="#fff" stroke="#777" stroke-width="1"/><path d="M1.5 5.5 H15.5 M1.5 9.5 H6 M5.5 1.5 V13.5 M10.5 1.5 V5.5" stroke="#999" stroke-width="1"/><rect x="6" y="6" width="9" height="7" fill="#bcd5ee"/><path d="M11 9.5 L16 4.5 L17.8 6.3 L12.8 11.3 Z" fill="#6a6a6a"/><path d="M10.6 9.8 L12.6 11.8 C12.2 14.8 9 16.8 5.2 17 C6.2 14.6 7.8 11.2 10.6 9.8 Z" fill="#2b74b8"/></svg>
<span class="t" style="left:823.38px;top:71.92px;font-size:12.5px;line-height:12.5px;color:#262626;transform:scaleX(0.9248);">Вставить</span>
<span class="t" style="left:823.38px;top:94.72px;font-size:12.5px;line-height:12.5px;color:#262626;transform:scaleX(0.9429);">Удалить</span>
<span class="t" style="left:823.38px;top:117.73px;font-size:12.5px;line-height:12.5px;color:#262626;transform:scaleX(1.0134);">Формат</span>
<svg style="position:absolute;left:882px;top:76px;" width="6" height="4" viewBox="0 0 6 4"><path d="M0 0.5 H5.5 L2.75 3.5 Z" fill="#666"/></svg>
<svg style="position:absolute;left:878px;top:99px;" width="6" height="4" viewBox="0 0 6 4"><path d="M0 0.5 H5.5 L2.75 3.5 Z" fill="#666"/></svg>
<svg style="position:absolute;left:870px;top:122px;" width="6" height="4" viewBox="0 0 6 4"><path d="M0 0.5 H5.5 L2.75 3.5 Z" fill="#666"/></svg>
<svg style="position:absolute;left:804px;top:68px;" width="18" height="18" viewBox="0 0 18 18"><path d="M1.5 1.5 H9.5 V4.5 H1.5 Z M1.5 10.5 H9.5 V16.5 H1.5 Z M1.5 13.5 H9.5 M5.5 10.5 V16.5 M5.5 1.5 V4.5" stroke="#777" stroke-width="1" fill="#fff"/><rect x="7.5" y="5.5" width="9" height="4" fill="#bcd5ee" stroke="#777" stroke-width="1"/><path d="M7 7.5 H2 M4.5 5 L2 7.5 L4.5 10" stroke="#2b74b8" stroke-width="1.8" fill="none"/></svg>
<svg style="position:absolute;left:804px;top:91px;" width="18" height="18" viewBox="0 0 18 18"><path d="M1.5 1.5 H9.5 V4.5 H1.5 Z M1.5 10.5 H9.5 V16.5 H1.5 Z M1.5 13.5 H9.5 M5.5 10.5 V16.5 M5.5 1.5 V4.5" stroke="#777" stroke-width="1" fill="#fff"/><rect x="4.5" y="5.5" width="5" height="4" fill="#bcd5ee" stroke="#777" stroke-width="1"/><path d="M10 4 L16 10 M16 4 L10 10" stroke="#f0553a" stroke-width="1.5"/></svg>
<svg style="position:absolute;left:804px;top:113px;" width="18" height="18" viewBox="0 0 18 18"><path d="M1.5 1.5 V3.5 M15.5 1.5 V3.5 M2 2.5 H15 M2 2.5 L4 1 M2 2.5 L4 4 M15 2.5 L13 1 M15 2.5 L13 4" stroke="#2b74b8" stroke-width="1" fill="none"/><rect x="1.5" y="5.5" width="14" height="11" fill="#fff" stroke="#777" stroke-width="1"/><path d="M1.5 9 H15.5 M1.5 12.5 H15.5 M5.5 5.5 V16.5 M9 5.5 V16.5 M12.5 5.5 V16.5" stroke="#aaa" stroke-width="1"/><rect x="5" y="9" width="4.5" height="4" fill="#2b74b8"/></svg>
<svg style="position:absolute;left:915px;top:68px;" width="17" height="17" viewBox="0 0 17 17"><path d="M15.5 2 H2 L8.5 8.5 L2 15 H15.5" stroke="#444" stroke-width="2" fill="none" stroke-linejoin="miter"/></svg>
<svg style="position:absolute;left:938px;top:76px;" width="6" height="4" viewBox="0 0 6 4"><path d="M0 0.5 H5.5 L2.75 3.5 Z" fill="#555"/></svg>
<svg style="position:absolute;left:971px;top:76px;" width="6" height="4" viewBox="0 0 6 4"><path d="M0 0.5 H5.5 L2.75 3.5 Z" fill="#555"/></svg>
<svg style="position:absolute;left:936px;top:99px;" width="6" height="4" viewBox="0 0 6 4"><path d="M0 0.5 H5.5 L2.75 3.5 Z" fill="#555"/></svg>
<svg style="position:absolute;left:971px;top:99px;" width="6" height="4" viewBox="0 0 6 4"><path d="M0 0.5 H5.5 L2.75 3.5 Z" fill="#555"/></svg>
<svg style="position:absolute;left:936px;top:122px;" width="6" height="4" viewBox="0 0 6 4"><path d="M0 0.5 H5.5 L2.75 3.5 Z" fill="#555"/></svg>
<svg style="position:absolute;left:950px;top:68px;" width="18" height="18" viewBox="0 0 18 18"><text x="1.3" y="7.8" font-family="Liberation Sans" font-weight="bold" font-size="9.5" fill="#2b74b8">A</text><text x="1.6" y="17" font-family="Liberation Sans" font-weight="bold" font-size="9.5" fill="#8f4fb5">Я</text><path d="M10 5.5 H17.5 L14.8 9 V12.5 H12.7 V9 Z" fill="#666"/></svg>
<svg style="position:absolute;left:916px;top:91px;" width="16" height="18" viewBox="0 0 16 18"><rect x="1.5" y="1.5" width="13" height="15" fill="#fff" stroke="#666" stroke-width="1"/><rect x="1" y="1" width="14" height="3" fill="#777"/><path d="M8 6 V13.5 M4.5 10.5 L8 14 L11.5 10.5" stroke="#2b74b8" stroke-width="2" fill="none"/></svg>
<svg style="position:absolute;left:951px;top:93px;" width="16" height="15" viewBox="0 0 16 15"><circle cx="9.5" cy="5.5" r="4" fill="none" stroke="#2b74b8" stroke-width="1.8"/><path d="M6.5 8.5 L1.8 13.2" stroke="#2b74b8" stroke-width="2.6" stroke-linecap="round"/></svg>
<svg style="position:absolute;left:916px;top:115px;" width="16" height="15" viewBox="0 0 16 15"><path d="M9 1.5 L14.5 7 L8 13.5 L2.5 8 Z" fill="#f3848f"/><path d="M2 8.5 L7.5 14" stroke="#f3f3f3" stroke-width="1"/><path d="M1.2 9.5 L6.5 14.8" stroke="#f3848f" stroke-width="1.2"/></svg>
<svg style="position:absolute;left:1024px;top:143px;" width="11" height="8" viewBox="0 0 11 8"><path d="M1.5 6.3 L5.5 2.3 L9.5 6.3" stroke="#666" stroke-width="1.9" fill="none"/></svg>
<svg style="position:absolute;left:91px;top:144px;" width="8" height="8" viewBox="0 0 8 8"><path d="M0.5 0.5 H5.5 M0.5 0.5 V5.5" stroke="#888" stroke-width="1" fill="none"/><path d="M2.5 2.5 L6 6 M7 3.5 V7 H3.5 Z" stroke="#555" stroke-width="1" fill="#555"/></svg>
<svg style="position:absolute;left:312px;top:144px;" width="8" height="8" viewBox="0 0 8 8"><path d="M0.5 0.5 H5.5 M0.5 0.5 V5.5" stroke="#888" stroke-width="1" fill="none"/><path d="M2.5 2.5 L6 6 M7 3.5 V7 H3.5 Z" stroke="#555" stroke-width="1" fill="#555"/></svg>
<svg style="position:absolute;left:481px;top:144px;" width="8" height="8" viewBox="0 0 8 8"><path d="M0.5 0.5 H5.5 M0.5 0.5 V5.5" stroke="#888" stroke-width="1" fill="none"/><path d="M2.5 2.5 L6 6 M7 3.5 V7 H3.5 Z" stroke="#555" stroke-width="1" fill="#555"/></svg>
<svg style="position:absolute;left:575px;top:144px;" width="8" height="8" viewBox="0 0 8 8"><path d="M0.5 0.5 H5.5 M0.5 0.5 V5.5" stroke="#888" stroke-width="1" fill="none"/><path d="M2.5 2.5 L6 6 M7 3.5 V7 H3.5 Z" stroke="#555" stroke-width="1" fill="#555"/></svg>
<svg style="position:absolute;left:92px;top:175px;" width="9" height="6" viewBox="0 0 9 6"><path d="M0.5 0.5 H7.5 L4 4.5 Z" fill="#666"/></svg>
<div style="left:121px;top:174px;width:2px;height:2px;background:#a8a8a8;"></div>
<div style="left:121px;top:178.5px;width:2px;height:2px;background:#a8a8a8;"></div>
<div style="left:121px;top:183px;width:2px;height:2px;background:#a8a8a8;"></div>
<svg style="position:absolute;left:150px;top:173px;" width="12" height="12" viewBox="0 0 12 12"><path d="M1 1.5 L11 11 M11 1.5 L1 11" stroke="#b8b8b8" stroke-width="1.5"/></svg>
<svg style="position:absolute;left:185px;top:173px;" width="15" height="13" viewBox="0 0 15 13"><path d="M1.5 7 L5.5 11 L13.5 2" stroke="#c6c6c6" stroke-width="2.6" fill="none"/></svg>
<svg style="position:absolute;left:215px;top:168px;" width="25" height="22" viewBox="0 0 25 22"><path d="M15.8 5.9 C14.6 4.6 12.9 5 12.3 7.6 L10.5 14.6 C10.1 16.4 9 17.3 7.4 16.6" stroke="#666" stroke-width="1.7" fill="none" stroke-linecap="round"/><path d="M9.2 8.6 H13.9" stroke="#666" stroke-width="1.2"/><path d="M12.8 11.4 C14 11 14.6 11.8 15.2 13.2 C15.7 14.5 16.4 15 17.4 14.6 M18.3 11.2 L12.3 15" stroke="#666" stroke-width="1.2" fill="none"/></svg>
<svg style="position:absolute;left:1026px;top:175px;" width="9" height="7" viewBox="0 0 9 7"><path d="M1.2 1.5 L4.5 4.8 L7.8 1.5" stroke="#666" stroke-width="1.9" fill="none"/></svg>
<svg style="position:absolute;left:1026px;top:204px;" width="15" height="15" viewBox="0 0 15 15"><path d="M3.5 9.5 H11.5 L7.5 5.5 Z" fill="#777"/></svg>
<svg style="position:absolute;left:1026px;top:655px;" width="15" height="15" viewBox="0 0 15 15"><path d="M3.5 5.5 H11.5 L7.5 9.5 Z" fill="#777"/></svg>
<svg style="position:absolute;left:643px;top:676px;" width="15" height="15" viewBox="0 0 15 15"><path d="M9.5 3.5 V11.5 L5.5 7.5 Z" fill="#777"/></svg>
<svg style="position:absolute;left:1010px;top:676px;" width="15" height="15" viewBox="0 0 15 15"><path d="M5.5 3.5 V11.5 L9.5 7.5 Z" fill="#777"/></svg>
<div style="left:627px;top:677px;width:2px;height:2px;background:#b0b0b0;"></div>
<div style="left:627px;top:681px;width:2px;height:2px;background:#b0b0b0;"></div>
<div style="left:627px;top:685px;width:2px;height:2px;background:#b0b0b0;"></div>
<svg style="position:absolute;left:26px;top:679px;" width="6" height="8" viewBox="0 0 6 8"><path d="M5 0.5 V7.5 L1 4 Z" fill="#c6c6c6"/></svg>
<svg style="position:absolute;left:55px;top:679px;" width="6" height="8" viewBox="0 0 6 8"><path d="M1 0.5 V7.5 L5 4 Z" fill="#c6c6c6"/></svg>
<svg style="position:absolute;left:299px;top:674px;" width="18" height="18" viewBox="0 0 18 18"><circle cx="9" cy="9" r="7.5" fill="none" stroke="#666" stroke-width="1"/><path d="M9 5 V13 M5 9 H13" stroke="#666" stroke-width="2"/></svg>
<svg style="position:absolute;left:71px;top:700px;" width="16" height="16" viewBox="0 0 16 16"><circle cx="4.3" cy="4" r="3" fill="#666"/><rect x="8" y="2" width="6" height="2.5" fill="#666"/><path d="M1.5 5.5 V14.5 H14.5 V5.5" fill="none" stroke="#666" stroke-width="1"/><path d="M3 8.5 H13 M3 10.5 H13 M3 12.5 H13" stroke="#888" stroke-width="1" stroke-dasharray="2 1"/></svg>
<svg style="position:absolute;left:755px;top:700px;" width="15" height="15" viewBox="0 0 15 15"><rect x="1.5" y="1.5" width="12" height="12" fill="none" stroke="#666" stroke-width="1"/><path d="M1.5 5.5 H13.5 M1.5 9.5 H13.5 M5.5 1.5 V13.5 M9.5 1.5 V13.5" stroke="#666" stroke-width="1"/></svg>
<svg style="position:absolute;left:793px;top:700px;" width="15" height="15" viewBox="0 0 15 15"><rect x="1.5" y="1.5" width="13" height="12" fill="none" stroke="#666" stroke-width="1"/><rect x="3.5" y="3.5" width="9" height="8" fill="none" stroke="#666" stroke-width="1"/><path d="M5.5 5.5 H10.5 M5.5 7.5 H10.5 M5.5 9.5 H10.5" stroke="#666" stroke-width="1"/></svg>
<svg style="position:absolute;left:831px;top:700px;" width="16" height="15" viewBox="0 0 16 15"><path d="M1.5 1.5 H14.5 V13.5 H1.5 Z M1.5 9.5 H9.5 V1.5 M5.5 1.5 V9.5" fill="none" stroke="#666" stroke-width="1"/></svg>
<div style="left:862px;top:707px;width:7px;height:2px;background:#555;"></div>
<div style="left:873px;top:708px;width:100px;height:1px;background:#a0a0a0;"></div>
<div style="left:921px;top:702px;width:5px;height:11px;background:#666;"></div>
<div style="left:976px;top:707px;width:8px;height:2px;background:#555;"></div>
<div style="left:979px;top:704px;width:2px;height:8px;background:#555;"></div>
</body></html>
